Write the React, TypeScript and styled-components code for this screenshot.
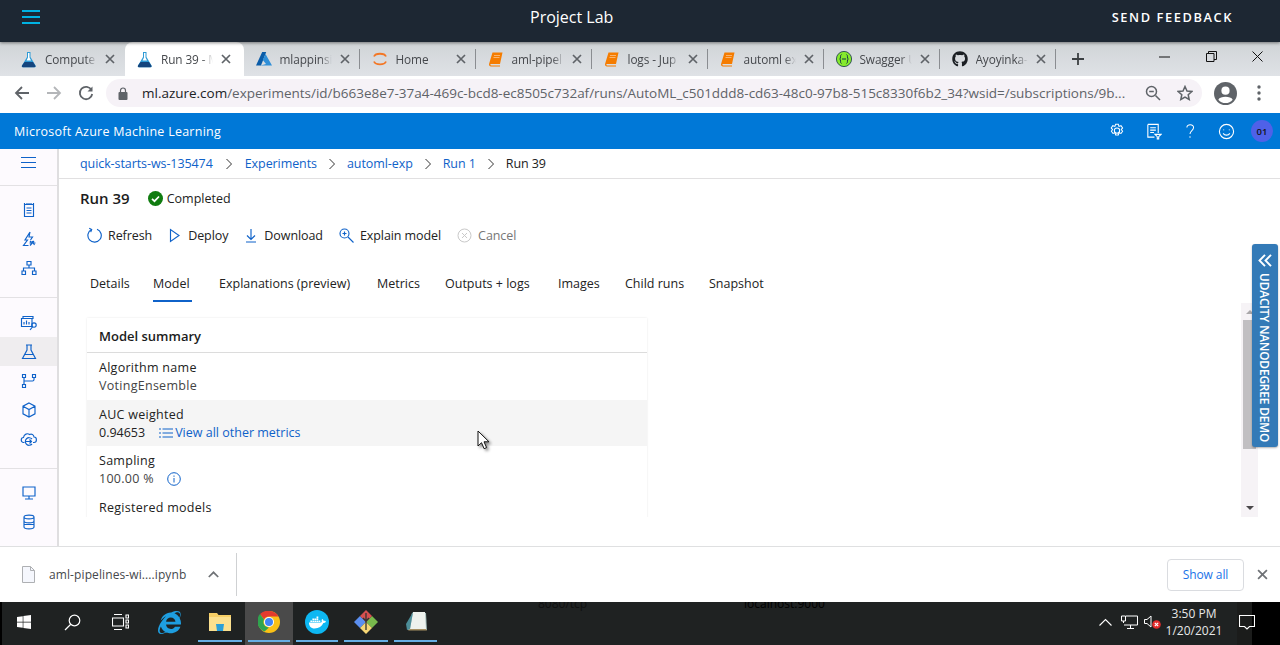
import React from "react";
import styled, { createGlobalStyle } from "styled-components";
import { FaGithub, FaWindows, FaInternetExplorer, FaDocker } from "react-icons/fa";

const Global = createGlobalStyle`
  html, body { margin: 0; padding: 0; background: #fff; overflow: hidden; }
  * { box-sizing: border-box; }
  #root { width: 1280px; height: 645px; }
`;

const Page = styled.div`
  position: relative;
  width: 1280px;
  height: 645px;
  overflow: hidden;
  display: flex;
  flex-direction: column;
  font-family: "Open Sans", "Noto Sans", sans-serif;
  font-size: 12.5px;
  color: #222;
  background: #fff;
`;

const LabBar = styled.header`
  height: 42px;
  flex: none;
  background: #1d2733;
  display: flex;
  align-items: center;
  padding-left: 22px;
  color: #fff;
  position: relative;
  z-index: 2;
  box-shadow: 0 1px 3px rgba(0, 0, 0, 0.45);
`;
const Burger = styled.div`
  width: 18px;
  height: 14px;
  border-top: 2px solid #00b2e2;
  border-bottom: 2px solid #00b2e2;
  position: relative;
  margin-top: -8px;
  &::after {
    content: "";
    position: absolute;
    left: 0;
    right: 0;
    top: 4px;
    height: 2px;
    background: #00b2e2;
  }
`;
const LabTitle = styled.div`
  margin-left: 490px;
  margin-top: -9px;
  font-size: 16px;
  width: 84px;
  white-space: nowrap;
`;
const Feedback = styled.div`
  margin-left: auto;
  margin-right: 47px;
  margin-top: -8px;
  font-size: 12.8px;
  font-weight: 600;
  letter-spacing: 1.6px;
`;

const TabStrip = styled.nav`
  height: 34px;
  flex: none;
  display: flex;
  align-items: stretch;
  padding-left: 9px;
  background: linear-gradient(#d0d4d7, #dfe2e6);
  position: relative;
`;
const Tab = styled.div<{ $active?: boolean; $sep?: boolean }>`
  width: ${(p) => (p.$active ? "118.5px" : "116px")};
  flex: none;
  display: flex;
  align-items: center;
  padding-left: 12px;
  position: relative;
  background: ${(p) => (p.$active ? "#fff" : "transparent")};
  border-radius: ${(p) => (p.$active ? "8px 8px 0 0" : "0")};
  &::after {
    content: "";
    display: ${(p) => (p.$sep ? "block" : "none")};
    position: absolute;
    right: 0;
    top: 7px;
    bottom: 7px;
    width: 1px;
    background: #8a8d91;
  }
`;
const TabIcon = styled.span`
  width: 16px;
  height: 16px;
  flex: none;
  display: flex;
  align-items: center;
  justify-content: center;
`;
const TabLabel = styled.span`
  margin-left: 8px;
  width: 52px;
  flex: none;
  font-size: 11.8px;
  letter-spacing: -0.1px;
  color: #45484c;
  white-space: nowrap;
  mask-image: linear-gradient(to right, #000 78%, transparent);
`;
const TabClose = styled.span`
  margin-left: 8px;
  width: 10px;
  height: 10px;
  flex: none;
  display: flex;
`;
const NewTab = styled.div`
  margin-left: 15px;
  width: 16px;
  align-self: center;
  display: flex;
`;
const WindowButtons = styled.div`
  margin-left: auto;
  margin-right: 17px;
  margin-top: 7px;
  width: 104px;
  height: 14px;
  display: flex;
  justify-content: space-between;
  align-items: center;
`;

const Omnibar = styled.div`
  height: 37px;
  flex: none;
  background: #fff;
  display: flex;
  align-items: center;
  padding: 0 0 3px 14px;
  color: #5f6368;
`;
const NavIcon = styled.span<{ $w?: number }>`
  width: ${(p) => p.$w ?? 16}px;
  height: 16px;
  margin-right: 16px;
  display: flex;
  flex: none;
`;
const Pill = styled.div`
  width: 1096px;
  height: 28px;
  margin-left: -4px;
  flex: none;
  background: #f6f2f7;
  border-radius: 14px;
  display: flex;
  align-items: center;
  padding-left: 12px;
`;
const Url = styled.div`
  margin-left: 14px;
  width: 985px;
  flex: none;
  white-space: nowrap;
  font-size: 13.5px;
  letter-spacing: -0.01px;
  color: #5f6368;
`;
const UrlHost = styled.span`
  color: #202124;
`;

const AzureBar = styled.div`
  height: 36px;
  flex: none;
  background: #0078d7;
  display: flex;
  align-items: center;
  color: #fff;
  padding-left: 14px;
`;
const AzureTitle = styled.div`
  font-size: 12.5px;
  letter-spacing: 0.25px;
`;
const AzureIcons = styled.div`
  margin-left: auto;
  margin-right: 7px;
  display: flex;
  align-items: center;
  gap: 20px;
`;
const Avatar = styled.div`
  width: 22px;
  height: 22px;
  margin-left: -4px;
  border-radius: 50%;
  background: #4f61e8;
  color: #111;
  font-size: 9.5px;
  font-weight: 600;
  display: flex;
  align-items: center;
  justify-content: center;
`;

const Body = styled.div`
  flex: 1;
  min-height: 0;
  display: flex;
`;
const Sidebar = styled.aside`
  width: 59px;
  flex: none;
  background: #fdfafe;
  border-right: 2px solid #dfdee0;
  display: flex;
  flex-direction: column;
`;
const SideTop = styled.div`
  height: 36px;
  flex: none;
  display: flex;
  justify-content: center;
  padding-top: 8px;
`;
const SideGroup = styled.div<{ $h?: number; $pad?: number }>`
  border-top: 1px solid #e3e1e4;
  padding-top: ${(p) => p.$pad ?? 10}px;
  height: ${(p) => (p.$h ? p.$h + "px" : "auto")};
  flex: none;
`;
const SideItem = styled.div<{ $active?: boolean }>`
  height: 29px;
  display: flex;
  align-items: center;
  justify-content: center;
  background: ${(p) => (p.$active ? "#efedef" : "transparent")};
`;

const Main = styled.main`
  flex: 1;
  min-width: 0;
  display: flex;
  flex-direction: column;
`;
const Crumbs = styled.div`
  height: 30px;
  flex: none;
  border-bottom: 1px solid #e1e0e1;
  padding: 0 0 0 21px;
  display: flex;
  align-items: center;
  font-size: 12.5px;
  letter-spacing: -0.08px;
`;
const Crumb = styled.span<{ $current?: boolean }>`
  color: ${(p) => (p.$current ? "#222" : "#0f62c9")};
  white-space: nowrap;
`;
const CrumbSep = styled.span<{ $w: number }>`
  width: ${(p) => p.$w}px;
  flex: none;
  display: flex;
  justify-content: center;
`;
const TitleRow = styled.div`
  height: 38px;
  flex: none;
  display: flex;
  align-items: center;
  padding-left: 21px;
`;
const RunTitle = styled.h1`
  margin: 0 18px 0 0;
  font-size: 15px;
  font-weight: 600;
  color: #1c1c1c;
`;
const Status = styled.span`
  margin-left: 4px;
  padding-top: 1px;
  font-size: 12.5px;
`;
const Toolbar = styled.div`
  height: 36px;
  flex: none;
  display: flex;
  align-items: center;
  gap: 16px;
  padding-left: 28px;
  letter-spacing: -0.08px;
`;
const Action = styled.span<{ $off?: boolean }>`
  display: flex;
  align-items: center;
  gap: 6px;
  font-size: 12.5px;
  color: ${(p) => (p.$off ? "#777" : "#222")};
`;
const TabsRow = styled.div`
  height: 37px;
  margin-top: 12px;
  flex: none;
  display: flex;
  padding-left: 31px;
`;
const PageTab = styled.div<{ $w: number; $active?: boolean }>`
  width: ${(p) => p.$w}px;
  flex: none;
  display: flex;
  align-items: center;
  justify-content: flex-start;
  white-space: nowrap;
  font-size: 12.5px;
  padding-bottom: 1px;
  position: relative;
  &::after {
    content: "";
    display: ${(p) => (p.$active ? "block" : "none")};
    position: absolute;
    left: 0;
    width: 39px;
    bottom: 0;
    height: 2px;
    background: #0f62c9;
  }
`;

const ScrollArea = styled.div`
  margin-top: 1px;
  height: 214px;
  flex: none;
  width: 1199px;
  display: flex;
  overflow: hidden;
`;
const ScrollContent = styled.div`
  flex: 1;
  padding: 15px 0 0 28px;
`;
const Card = styled.section`
  width: 560px;
  box-shadow: 0 0 2px rgba(0, 0, 0, 0.1);
  background: #fff;
`;
const CardHead = styled.h2`
  margin: 0;
  height: 35px;
  padding: 2px 0 0 12px;
  display: flex;
  align-items: center;
  font-size: 13px;
  font-weight: 600;
  color: #1c1c1c;
  border-bottom: 1px solid #dcdcdc;
`;
const Field = styled.div<{ $shade?: boolean }>`
  height: 46.5px;
  padding: 6px 0 0 12px;
  background: ${(p) => (p.$shade ? "#f5f5f5" : "transparent")};
  letter-spacing: 0.28px;
`;
const FieldName = styled.div`
  height: 18px;
  line-height: 18px;
  font-size: 12.5px;
  color: #222;
`;
const FieldValue = styled.div`
  height: 18px;
  line-height: 18px;
  font-size: 12.5px;
  color: #444;
  display: flex;
  align-items: center;
`;
const Metric = styled.span`
  color: #222;
  letter-spacing: 0;
`;
const Link = styled.span`
  color: #0f62c9;
  margin-left: 2px;
  letter-spacing: 0;
`;
const Track = styled.div`
  width: 17px;
  flex: none;
  background: #f6f3f6;
  display: flex;
  flex-direction: column;
  align-items: center;
  justify-content: space-between;
  padding: 7px 0;
  position: relative;
`;
const Thumb = styled.div`
  position: absolute;
  left: 2px;
  right: 2px;
  top: 17px;
  height: 129px;
  background: #c1bfc2;
`;
const Arrow = styled.div<{ $up?: boolean; $c: string }>`
  width: 0;
  height: 0;
  border-left: 4px solid transparent;
  border-right: 4px solid transparent;
  ${(p) => (p.$up ? `border-bottom: 4px solid ${p.$c};` : `border-top: 4px solid ${p.$c};`)}
`;

const Udacity = styled.aside`
  position: absolute;
  left: 1252px;
  top: 244px;
  width: 26px;
  height: 203px;
  background: #337ab7;
  border-radius: 3px;
  box-shadow: 0 1px 2px rgba(0, 0, 0, 0.3);
  color: #fff;
  display: flex;
  flex-direction: column;
  align-items: center;
  padding-top: 10px;
  gap: 6px;
`;
const UdacityText = styled.div`
  writing-mode: vertical-rl;
  font-size: 11.8px;
  font-weight: 600;
  letter-spacing: -0.1px;
  white-space: nowrap;
`;
const Pointer = styled.svg`
  position: absolute;
  left: 477px;
  top: 430px;
  filter: drop-shadow(2px 2px 1.5px rgba(0, 0, 0, 0.45));
`;

const DownloadBar = styled.div`
  height: 56px;
  flex: none;
  border-top: 1px solid #dfe0e1;
  background: #fff;
  display: flex;
  align-items: center;
  padding-left: 22px;
`;
const FileName = styled.span`
  margin-left: 14px;
  width: 141px;
  font-size: 12px;
  letter-spacing: 0.1px;
  color: #45484c;
  white-space: nowrap;
`;
const Caret = styled.span`
  margin-left: 18px;
  width: 14px;
  display: flex;
`;
const BarRule = styled.span`
  margin-left: 14px;
  width: 1px;
  height: 43px;
  background: #cfd1d3;
`;
const ShowAll = styled.button`
  margin-left: auto;
  width: 77px;
  height: 32px;
  background: #fff;
  border: 1px solid #dadce0;
  border-radius: 4px;
  color: #1a73e8;
  font: 12px "Open Sans", sans-serif;
  letter-spacing: -0.1px;
  padding: 0;
`;
const BarClose = styled.span`
  margin: 0 12px 0 13px;
  width: 11px;
  display: flex;
`;

const Taskbar = styled.footer`
  height: 43px;
  flex: none;
  position: relative;
  background: linear-gradient(to right, #000 2px, #1f2222 2px, #1f2222 1237px, #1b1c1b 1237px, #1b1c1b 1252px, #000 1252px);
  display: flex;
  color: #fff;
  overflow: hidden;
`;
const Ghost = styled.span<{ $x: number; $c: string }>`
  position: absolute;
  left: ${(p) => p.$x}px;
  top: -7px;
  font-size: 12px;
  color: ${(p) => p.$c};
`;
const TaskSlot = styled.div<{ $w: number; $active?: boolean; $bar?: boolean }>`
  width: ${(p) => p.$w}px;
  height: 43px;
  flex: none;
  display: flex;
  align-items: center;
  justify-content: center;
  position: relative;
  padding-bottom: 3px;
  background: ${(p) => (p.$active ? "#4a4a4a" : "transparent")};
  &::after {
    content: "";
    display: ${(p) => (p.$bar ? "block" : "none")};
    position: absolute;
    left: 3px;
    right: 3px;
    bottom: 3px;
    height: 2px;
    background: #66aee4;
  }
`;
const DockerBadge = styled.span`
  width: 24px;
  height: 24px;
  border-radius: 12px;
  background: #0db7f2;
  display: flex;
  align-items: center;
  justify-content: center;
`;
const Tray = styled.div`
  margin-left: auto;
  display: flex;
  align-items: center;
  padding-bottom: 3px;
`;
const TrayIcon = styled.span<{ $w: number }>`
  width: ${(p) => p.$w}px;
  flex: none;
  display: flex;
  justify-content: center;
`;
const Clock = styled.div`
  width: 62px;
  text-align: center;
  font-size: 12px;
  line-height: 17px;
  color: #e8e8e8;
  white-space: nowrap;
`;
const Notify = styled.span`
  margin: 0 25px 0 14px;
  width: 16px;
  display: flex;
`;

const X = ({ c = "#5f6368", w = 1.7 }: { c?: string; w?: number }) => (
  <svg width="100%" height="100%" viewBox="0 0 10 10">
    <path d="M1 1l8 8M9 1l-8 8" stroke={c} strokeWidth={w} fill="none" />
  </svg>
);
const Flask = () => (
  <svg width="16" height="17" viewBox="0 0 16 17">
    <path d="M6 1h3.5v5l5 8.5c.5 1 0 1.8-1 1.8H2c-1 0-1.500-.8-1-1.800L6 6z" fill="#2e9bd6" />
    <path d="M3.500 11h8.500l2.300 3.600c.5 1 0 1.700-1 1.700H2c-1 0-1.500-.7-1-1.700z" fill="#14457e" />
    <path d="M7 2h1.500v4.500l1.500 3H5.500L7 6.500z" fill="#fff" />
  </svg>
);
const AzureA = () => (
  <svg width="16" height="14" viewBox="0 0 16 14">
    <path d="M6.200 0h4L5 13.500H0z" fill="#0a5ca8" />
    <path d="M9.500 2L16 13.500H4.500L10 12 6.800 8z" fill="#2f8fd8" />
  </svg>
);
const Ring = () => (
  <svg width="16" height="16" viewBox="0 0 16 16" fill="none" stroke="#f37726" strokeWidth="1.800">
    <path d="M2 5.500C3.500 1.800 12.500 1.800 14 5.500" />
    <path d="M2 10.500C3.500 14.200 12.500 14.200 14 10.500" />
  </svg>
);
const Book = () => (
  <svg width="14" height="15" viewBox="0 0 14 15">
    <path d="M3.500 0.500H13.500L11 12H2.500C1 12 .8 13.500 2.300 13.500H11v1H2C.2 14.500-.3 13 .2 11.500z" fill="#f57c00" />
    <path d="M5 3.500h6M4.500 5.500h6" stroke="#fbc38a" strokeWidth=".8" />
  </svg>
);
const Swagger = () => (
  <svg width="16" height="16" viewBox="0 0 16 16">
    <circle cx="8" cy="8" r="7.600" fill="#85ea2d" stroke="#173647" strokeWidth=".8" />
    <path d="M5.500 3.500C3.800 4 5.200 7.500 3.700 8c1.500.5.1 4 1.800 4.500M10.500 3.500c1.700.5.3 4 1.800 4.500-1.500.5-.1 4-1.800 4.500M6 8h4" fill="none" stroke="#173647" strokeWidth="1" />
  </svg>
);
const Tabs = [
  { t: "Compute", i: <Flask /> },
  { t: "Run 39 - M", i: <Flask />, active: true },
  { t: "mlappinsi", i: <AzureA />, sep: true },
  { t: "Home", i: <Ring />, sep: true },
  { t: "aml-pipel", i: <Book />, sep: true },
  { t: "logs - Jup", i: <Book />, sep: true },
  { t: "automl ex", i: <Book />, sep: true },
  { t: "Swagger U", i: <Swagger />, sep: true },
  { t: "Ayoyinka-", i: <FaGithub size={16} color="#1b1f23" />, sep: true },
];

const line = { fill: "none", stroke: "#0f62c9", strokeWidth: 1.15 } as const;
const Ic = ({ children, w = 18, s = line as React.SVGProps<SVGSVGElement> }: { children: React.ReactNode; w?: number; s?: React.SVGProps<SVGSVGElement> }) => (
  <svg width={w} height={w} viewBox="0 0 18 18" {...s}>
    {children}
  </svg>
);

const sideA = [
  <Ic key="n"><path d="M4.500 3.500h9v12h-9zM4.500 2v1.500M7 2v1.500M9 2v1.500M11 2v1.500M13.500 2v1.500M6.500 7h5M6.500 9.500h5M6.500 12h5" /></Ic>,
  <Ic key="a"><path d="M10 2L5 10h2.500L3.500 15.500h5M10 2l-1 5h3.500l-2 3M10 11l1.500 1.500M14 11l-4 4.500M12 11l2.500 4M9.500 13h6" /></Ic>,
  <Ic key="d"><path d="M7 2.500h4v3.500H7zM9 6v3M3.500 12V9h11v3M2 12h3.500v3.500H2zM12.500 12H16v3.500h-3.500z" /></Ic>,
];
const sideB = [
  <Ic key="m"><path d="M3 5V2.500h10V5M1.500 4.500h10.500v8H1.500zM4 10.500V8M6.500 10.500V6.500M9 10.500V8" /><circle cx="14" cy="11" r="2.200" /><path d="M12.500 12.800L10 16" /></Ic>,
  <Ic key="f"><path d="M6 2h6M7 2v5L2.500 15.500h13L11 7V2M5 11.500h8" /></Ic>,
  <Ic key="p"><path d="M2.500 2.500h3v3h-3zM12.500 2.500h3v3h-3zM2.500 12.500h3v3h-3zM4 5.500v7M14 5.500V7.500c0 1-.5 1.500-1.500 1.500H4" /></Ic>,
  <Ic key="c"><path d="M9 2l6 3.200v7.600L9 16l-6-3.200V5.200zM3 5.200L9 8.500l6-3.300M9 8.500V16" /></Ic>,
  <Ic key="e"><path d="M4.500 12.500H3.500C.5 12.500.5 7.500 3.500 7.500 4 4 7.500 3 9.500 4.500c2-1 4.300 0 4.500 2.500 3.200 0 3.200 5.500 0 5.500h-1" /><path d="M12 14a3.800 3.800 0 1 1 0-5M5.500 11.500h6M9.500 9.500l2 2-2 2" /></Ic>,
];
const sideC = [
  <Ic key="s"><path d="M3 3h12v9H3zM9 12v2.500M5 15h8" /></Ic>,
  <Ic key="b"><path d="M4 4c0-2.500 10-2.500 10 0v10c0 2.500-10 2.500-10 0zM4 4c0 2.500 10 2.500 10 0M4 8c0 2.500 10 2.500 10 0M4 11.500h10" /></Ic>,
];

const pageTabs = [
  { t: "Details", w: 63 },
  { t: "Model", w: 66, active: true },
  { t: "Explanations (preview)", w: 158 },
  { t: "Metrics", w: 68 },
  { t: "Outputs + logs", w: 113 },
  { t: "Images", w: 67 },
  { t: "Child runs", w: 84 },
  { t: "Snapshot", w: 60 },
];

const Chevron = () => (
  <svg width="8" height="12" viewBox="0 0 8 12" fill="none" stroke="#333" strokeWidth="1">
    <path d="M1.500 1l5 5-5 5" />
  </svg>
);
const whiteLine = { fill: "none", stroke: "#fff", strokeWidth: 1.15 } as const;

export default function App() {
  return (
    <Page>
      <Global />
      <LabBar>
        <Burger />
        <LabTitle>Project Lab</LabTitle>
        <Feedback>SEND FEEDBACK</Feedback>
      </LabBar>
      <TabStrip>
        {Tabs.map((tab) => (
          <Tab key={tab.t} $active={tab.active} $sep={tab.sep}>
            <TabIcon>{tab.i}</TabIcon>
            <TabLabel>{tab.t}</TabLabel>
            <TabClose><X /></TabClose>
          </Tab>
        ))}
        <NewTab>
          <svg width="14" height="14" viewBox="0 0 14 14"><path d="M7 1v12M1 7h12" stroke="#3c4043" strokeWidth="1.800" /></svg>
        </NewTab>
        <WindowButtons>
          <svg width="11" height="11" viewBox="0 0 11 11"><path d="M0 6h11" stroke="#111" strokeWidth="1" /></svg>
          <svg width="11" height="11" viewBox="0 0 11 11" fill="none" stroke="#111" strokeWidth="1"><path d="M.5 2.500h7.500v8H.5zM2.500 2.500V.5h8v8H8" /></svg>
          <svg width="11" height="11" viewBox="0 0 11 11"><path d="M.5.5l10 10M10.500.5l-10 10" stroke="#111" strokeWidth="1" /></svg>
        </WindowButtons>
      </TabStrip>
      <Omnibar>
        <NavIcon>
          <svg width="16" height="16" viewBox="0 0 16 16" fill="none" stroke="#5f6368" strokeWidth="1.800"><path d="M15 8H2M8 2L2 8l6 6" /></svg>
        </NavIcon>
        <NavIcon>
          <svg width="16" height="16" viewBox="0 0 16 16" fill="none" stroke="#b4b6b9" strokeWidth="1.800"><path d="M1 8h13M8 2l6 6-6 6" /></svg>
        </NavIcon>
        <NavIcon>
          <svg width="16" height="16" viewBox="0 0 16 16" fill="none" stroke="#5f6368" strokeWidth="1.800"><path d="M13.500 5A6.200 6.200 0 1 0 14.200 9" /><path d="M14.500 1.500v5h-5z" fill="#5f6368" stroke="none" /></svg>
        </NavIcon>
        <Pill>
          <svg width="10" height="13" viewBox="0 0 10 13"><path d="M2.500 5V3.500a2.500 2.500 0 0 1 5 0V5" fill="none" stroke="#5f6368" strokeWidth="1.200" /><rect x="0.500" y="5" width="9" height="8" rx="1" fill="#5f6368" /></svg>
          <Url><UrlHost>ml.azure.com</UrlHost>/experiments/id/b663e8e7-37a4-469c-bcd8-ec8505c732af/runs/AutoML_c501ddd8-cd63-48c0-97b8-515c8330f6b2_34?wsid=/subscriptions/9b...</Url>
          <svg width="16" height="16" viewBox="0 0 16 16" fill="none" stroke="#5f6368" strokeWidth="1.500" style={{ marginLeft: 18, flex: "none" }}><circle cx="6.500" cy="6.500" r="5" /><path d="M10.500 10.500L15 15M4.200 6.500h4.600" /></svg>
          <svg width="16" height="16" viewBox="0 0 16 16" fill="none" stroke="#5f6368" strokeWidth="1.500" style={{ marginLeft: 16, flex: "none" }}><path d="M8 1.500l2 4.500 4.800.5-3.600 3.200 1 4.800L8 12l-4.200 2.500 1-4.800L1.200 6.500 6 6z" /></svg>
        </Pill>
        <svg width="23" height="23" viewBox="0 0 24 24" style={{ marginLeft: 12, flex: "none" }}><circle cx="12" cy="12" r="12" fill="#5f6368" /><circle cx="12" cy="9" r="4.300" fill="#fff" /><path d="M4.500 18.500c2-4 13-4 15 0A10 10 0 0 1 12 22a10 10 0 0 1-7.500-3.500z" fill="#fff" /></svg>
        <svg width="4" height="16" viewBox="0 0 4 16" style={{ marginLeft: 20, flex: "none" }} fill="#5f6368"><circle cx="2" cy="2" r="1.700" /><circle cx="2" cy="8" r="1.700" /><circle cx="2" cy="14" r="1.700" /></svg>
      </Omnibar>
      <AzureBar>
        <AzureTitle>Microsoft Azure Machine Learning</AzureTitle>
        <AzureIcons>
          <Ic w={16} s={whiteLine}><path d="M7.500 1.500h3l.7 2.300 2.300-.8 1.800 2.500-1.500 1.900 1.500 1.900-1.800 2.500-2.300-.8-.7 2.500h-3l-.7-2.500-2.300.8-1.800-2.500L4 7.400 2.500 5.500 4.300 3l2.300.8z" /><circle cx="9" cy="8.500" r="3" /></Ic>
          <Ic w={17} s={whiteLine}><path d="M3 1.500h11v9M3 1.500v13.500h7M5.500 5h6M5.500 7.500h6M5.500 10h4M10.500 12h6.500l-2.500 2.500V17h-1.500v-2.500z" /></Ic>
          <Ic w={16} s={whiteLine}><path d="M5.500 5C5.500 .8 13 1 13 5.200c0 3.300-4 3.500-4 7.300M9 15v1.500" /></Ic>
          <Ic w={17} s={whiteLine}><circle cx="9" cy="9" r="7.500" /><path d="M5.500 11c1.500 2.500 5.500 2.500 7 0M6 7v.8M12 7v.8" /></Ic>
          <Avatar>01</Avatar>
        </AzureIcons>
      </AzureBar>
      <Body>
        <Sidebar>
          <SideTop>
            <svg width="15" height="11" viewBox="0 0 15 11" stroke="#0f62c9" strokeWidth="1"><path d="M0 .5h15M0 5.500h15M0 10.500h15" /></svg>
          </SideTop>
          <SideGroup $h={112} $pad={9}>{sideA.map((x) => <SideItem key={x.key}>{x}</SideItem>)}</SideGroup>
          <SideGroup $h={171}>{sideB.map((x) => <SideItem key={x.key} $active={x.key === "f"}>{x}</SideItem>)}</SideGroup>
          <SideGroup $pad={9}>{sideC.map((x) => <SideItem key={x.key}>{x}</SideItem>)}</SideGroup>
        </Sidebar>
        <Main>
          <Crumbs>
            <Crumb>quick-starts-ws-135474</Crumb>
            <CrumbSep $w={32}><Chevron /></CrumbSep>
            <Crumb>Experiments</Crumb>
            <CrumbSep $w={30}><Chevron /></CrumbSep>
            <Crumb>automl-exp</Crumb>
            <CrumbSep $w={30}><Chevron /></CrumbSep>
            <Crumb>Run 1</Crumb>
            <CrumbSep $w={30}><Chevron /></CrumbSep>
            <Crumb $current>Run 39</Crumb>
          </Crumbs>
          <TitleRow>
            <RunTitle>Run 39</RunTitle>
            <svg width="15" height="15" viewBox="0 0 15 15"><circle cx="7.500" cy="7.500" r="7.500" fill="#107c10" /><path d="M4 7.800l2.500 2.400L11 5.500" fill="none" stroke="#fff" strokeWidth="1.700" /></svg>
            <Status>Completed</Status>
          </TitleRow>
          <Toolbar>
            <Action>
              <svg width="15" height="16" viewBox="0 0 15 16" {...line}><path d="M4.500 2.500A6.700 6.700 0 1 0 10 2.200" /><path d="M2.200 1.200l2.500 1.300-1 2.600" /></svg>
              Refresh
            </Action>
            <Action>
              <svg width="14" height="15" viewBox="0 0 14 15" {...line}><path d="M2.500 1.500v12L11 7.500z" /></svg>
              Deploy
            </Action>
            <Action>
              <svg width="14" height="15" viewBox="0 0 14 15" {...line}><path d="M7 1v10M3 7.500L7 11.500l4-4M2 14h10" /></svg>
              Download
            </Action>
            <Action>
              <svg width="15" height="15" viewBox="0 0 15 15" {...line}><circle cx="5.500" cy="5.500" r="4.500" /><path d="M9 9l5.500 5.500M5.500 3.500v4M3.500 5.500h4" /></svg>
              Explain model
            </Action>
            <Action $off>
              <svg width="15" height="15" viewBox="0 0 15 15" fill="none" stroke="#c9c9c9" strokeWidth="1"><circle cx="7.500" cy="7.500" r="6.500" /><path d="M5 5l5 5M10 5l-5 5" /></svg>
              Cancel
            </Action>
          </Toolbar>
          <TabsRow>
            {pageTabs.map((t) => <PageTab key={t.t} $w={t.w} $active={t.active}>{t.t}</PageTab>)}
          </TabsRow>
          <ScrollArea>
            <ScrollContent>
              <Card>
                <CardHead>Model summary</CardHead>
                <Field>
                  <FieldName>Algorithm name</FieldName>
                  <FieldValue>VotingEnsemble</FieldValue>
                </Field>
                <Field $shade>
                  <FieldName>AUC weighted</FieldName>
                  <FieldValue>
                    <Metric>0.94653</Metric>
                    <svg width="14" height="10" viewBox="0 0 14 10" stroke="#0f62c9" strokeWidth="1" style={{ marginLeft: 14 }}><path d="M0 1h2M0 5h2M0 9h2M3.500 1H14M3.500 5H14M3.500 9H14" /></svg>
                    <Link>View all other metrics</Link>
                  </FieldValue>
                </Field>
                <Field>
                  <FieldName>Sampling</FieldName>
                  <FieldValue>
                    100.00 %
                    <svg width="14" height="14" viewBox="0 0 14 14" fill="none" stroke="#0f62c9" strokeWidth="1" style={{ marginLeft: 13 }}><circle cx="7" cy="7" r="6.300" /><path d="M7 6v4.500M7 3.500v1.300" /></svg>
                  </FieldValue>
                </Field>
                <Field>
                  <FieldName>Registered models</FieldName>
                </Field>
              </Card>
            </ScrollContent>
            <Track>
              <Arrow $up $c="#a9a7a9" />
              <Thumb />
              <Arrow $c="#4a484a" />
            </Track>
          </ScrollArea>
        </Main>
      </Body>
      <DownloadBar>
        <svg width="13" height="17" viewBox="0 0 13 17"><path d="M.5.500h8l4 4v12H.5z" fill="#f5f7fd" stroke="#aeb0b3" /><path d="M8.500.500v4h4" fill="none" stroke="#aeb0b3" /></svg>
        <FileName>aml-pipelines-wi....ipynb</FileName>
        <Caret>
          <svg width="11" height="7" viewBox="0 0 11 7" fill="none" stroke="#6f7276" strokeWidth="1.700"><path d="M.8 6l4.700-4.700L10.200 6" /></svg>
        </Caret>
        <BarRule />
        <ShowAll>Show all</ShowAll>
        <BarClose><X c="#6f7276" w={1.6} /></BarClose>
      </DownloadBar>
      <Taskbar>
        <Ghost $x={538} $c="#0f1010">8080/tcp</Ghost>
        <Ghost $x={744} $c="#000">localhost:9000</Ghost>
        <TaskSlot $w={48}><FaWindows size={16} color="#fff" /></TaskSlot>
        <TaskSlot $w={48}>
          <svg width="17" height="17" viewBox="0 0 17 17" fill="none" stroke="#fff" strokeWidth="1.200"><circle cx="10.500" cy="6.500" r="5.300" /><path d="M6.800 10.300L1 16" /></svg>
        </TaskSlot>
        <TaskSlot $w={48}>
          <svg width="17" height="16" viewBox="0 0 17 16" fill="none" stroke="#fff" strokeWidth="1.100"><path d="M2 .5h8M2 15.500h8M.5 4h11v8H.5zM14 1v3h2.500V1zM14 6v3h2.500V6zM14 11v3h2.500v-3z" /></svg>
        </TaskSlot>
        <TaskSlot $w={51}><FaInternetExplorer size={23} color="#1e9ee0" /></TaskSlot>
        <TaskSlot $w={50} $bar>
          <svg width="22" height="20" viewBox="0 0 22 20"><path d="M0 1h8l1.500 2H22v16H0z" fill="#f6cf66" /><path d="M0 5h22v14H0z" fill="#fbe08e" /><path d="M7 12h8l-1 7H8z" fill="#2a9fd8" /></svg>
        </TaskSlot>
        <TaskSlot $w={48} $active $bar>
          <svg width="22" height="22" viewBox="0 0 22 22"><circle cx="11" cy="11" r="11" fill="#fbc116" /><path d="M11 0a11 11 0 0 1 9.500 5.500H11A5.500 5.500 0 0 0 6 8.500L2 3a11 11 0 0 1 9-3z" fill="#e33b2e" /><path d="M2 3A11 11 0 0 0 6.500 20.500L11 16.500a5.500 5.500 0 0 1-5-8z" fill="#2fa44f" /><circle cx="11" cy="11" r="5" fill="#fff" /><circle cx="11" cy="11" r="4" fill="#4285f4" /></svg>
        </TaskSlot>
        <TaskSlot $w={48} $bar>
          <DockerBadge><FaDocker size={17} color="#fff" /></DockerBadge>
        </TaskSlot>
        <TaskSlot $w={50} $bar>
          <svg width="24" height="24" viewBox="0 0 24 24"><path d="M12 12L6 6 0 12l6 6z" fill="#5b8ff0" /><path d="M12 12l6-6 6 6-6 6z" fill="#78b94c" /><path d="M12 12l-6 6 6 6 6-6z" fill="#f7d774" /><path d="M12 12L6 6l6-6 6 6z" fill="#d64f4f" /><path d="M12 3v17M9 8l3 3 3-3" stroke="#333" strokeWidth="1.300" fill="none" /></svg>
        </TaskSlot>
        <TaskSlot $w={49} $bar>
          <svg width="24" height="24" viewBox="0 0 24 24"><path d="M8 3h14l1 17H4z" fill="#9fb9b8" /><path d="M9 2h12l1 17H6z" fill="#eef2ee" /><path d="M9 2L2 14l1 6 3-1z" fill="#4c8d98" /><path d="M6 19h16l1 1.500H4z" fill="#a58f62" /></svg>
        </TaskSlot>
        <Tray>
          <TrayIcon $w={24}>
            <svg width="13" height="8" viewBox="0 0 13 8" fill="none" stroke="#fff" strokeWidth="1.100"><path d="M.5 7.500l6-6 6 6" /></svg>
          </TrayIcon>
          <TrayIcon $w={24}>
            <svg width="17" height="14" viewBox="0 0 17 14" fill="none" stroke="#fff" strokeWidth="1"><path d="M5 1h11.500v9H3M.5 1h4v5h-4zM2.500 6v2M9.500 10v3M6 13.500h7" /></svg>
          </TrayIcon>
          <TrayIcon $w={22}>
            <svg width="17" height="14" viewBox="0 0 17 14"><path d="M.5 4.500h2.500L7 1v11L3 8.500H.5z" fill="none" stroke="#fff" strokeWidth="1" /><circle cx="12.500" cy="9.500" r="4.300" fill="#e32b2b" /><path d="M10.800 7.800l3.400 3.400M14.200 7.800l-3.400 3.400" stroke="#fff" strokeWidth="1.200" /></svg>
          </TrayIcon>
          <Clock>3:50 PM<br />1/20/2021</Clock>
          <Notify>
            <svg width="16" height="15" viewBox="0 0 16 15" fill="none" stroke="#fff" strokeWidth="1.100"><path d="M.5.500h15v11h-5L8 14l-2.500-2.500h-5z" /></svg>
          </Notify>
        </Tray>
      </Taskbar>
      <Udacity>
        <svg width="14" height="13" viewBox="0 0 14 13" fill="none" stroke="#fff" strokeWidth="1.900"><path d="M7 .8L1.500 6.500 7 12.200M13 .8L7.500 6.500l5.500 5.700" /></svg>
        <UdacityText>UDACITY NANODEGREE DEMO</UdacityText>
      </Udacity>
      <Pointer width="14" height="21" viewBox="0 0 14 21">
        <path d="M1 1v15l3.500-3.300 2.600 6 2.500-1.100-2.600-5.800H12z" fill="#fff" stroke="#111" strokeWidth="1" />
      </Pointer>
    </Page>
  );
}
